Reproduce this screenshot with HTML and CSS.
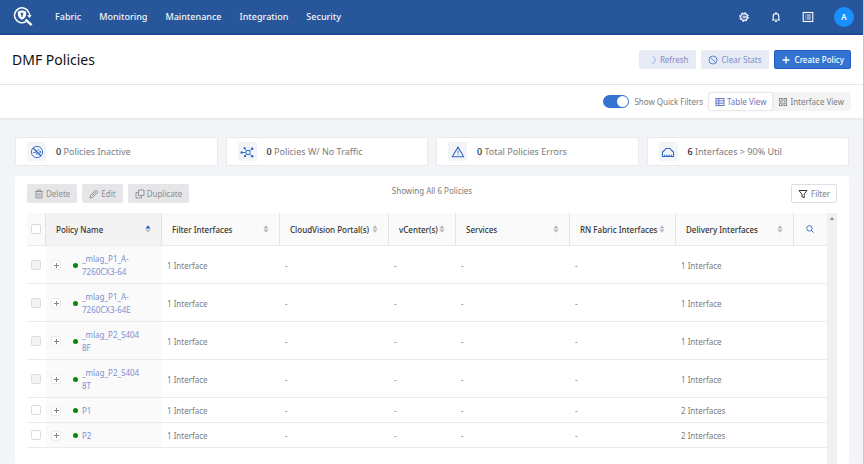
FILE: index.html
```html
<!DOCTYPE html>
<html lang="en">
  <head>
    <meta charset="UTF-8" />
    <meta name="viewport" content="width=device-width, initial-scale=1.0" />
    <title>DMF Policies</title>
    <link rel="stylesheet" href="styles.css">
  </head>
  <body>
    <svg class="defs" aria-hidden="true">
      <symbol id="sort" viewBox="0 0 6 8">
        <path class="up" d="M3 0.3 5.6 3.4H0.4z" />
        <path class="down" d="M3 7.7 5.6 4.6H0.4z" />
      </symbol>
    </svg>

    <header class="navbar">
      <a class="logo" href="#" aria-label="Home">
        <svg viewBox="0 0 20 20" width="20" height="20" fill="none" stroke="#fff">
          <path d="M15.6 5.1A7.4 7.4 0 1 0 12.8 14.6" stroke-width="1.5" />
          <path d="M15.4 4.6C16.4 6 16.8 7.5 16.6 9" stroke-width="1.3" />
          <path d="M14.2 8.2h4.6l-2.5 2.8z" fill="#fff" stroke="none" />
          <path d="M12.6 12.6l6 5.6" stroke-width="2.4" />
          <path d="M9 3.3l4.1 1.3v3c0 2.4-1.6 4.1-4.1 5.2-2.5-1.1-4.1-2.8-4.1-5.2v-3z" fill="#fff" stroke="none" />
          <path d="M9 5.4v4.5M7.7 7h2.6" stroke="#27569b" stroke-width="1.3" />
        </svg>
      </a>
      <nav class="nav-links">
        <a href="#">Fabric</a>
        <a href="#">Monitoring</a>
        <a href="#">Maintenance</a>
        <a href="#">Integration</a>
        <a href="#">Security</a>
      </nav>
      <div class="nav-actions">
        <button class="nav-icon" aria-label="Settings">
          <svg viewBox="0 0 12 12" width="12" height="12" fill="none" stroke="#fff">
            <circle cx="6" cy="6" r="3.4" stroke-width="1.2" />
            <circle cx="6" cy="6" r="4.4" stroke-width="1" stroke-dasharray="1.7 1.756" />
            <circle cx="6" cy="6" r="1.1" stroke-width="0.9" />
            <path d="M7 6h2.5" />
          </svg>
        </button>
        <button class="nav-icon" aria-label="Notifications">
          <svg viewBox="0 0 12 12" width="12" height="12" fill="none" stroke="#fff">
            <path d="M2 9h8M3.2 9V5.4a2.8 2.8 0 0 1 5.6 0V9M6 1v1.6" stroke-width="1.1" />
            <path d="M5 10.5h2" stroke-width="1.2" />
          </svg>
        </button>
        <button class="nav-icon" aria-label="Event list">
          <svg viewBox="0 0 12 12" width="12" height="12" fill="none" stroke="#fff">
            <rect x="1.2" y="1.5" width="9.6" height="9" stroke-width="1.1" />
            <path d="M3.3 4h1M5 4h3.8M3.3 6h1M5 6h3.8M3.3 8h1M5 8h3.8" stroke-width="0.9" />
          </svg>
        </button>
        <button class="avatar">A</button>
      </div>
    </header>

    <div class="title-bar">
      <h1>DMF Policies</h1>
      <div class="title-actions">
        <button class="btn btn-soft">
          <svg viewBox="0 0 10 10" width="10" height="10" fill="none" stroke="#8ea4d6">
            <path d="M6.5 1.2a4 4 0 0 1-.5 7.7" stroke-width="0.8" />
          </svg>
          Refresh
        </button>
        <button class="btn btn-soft">
          <svg viewBox="0 0 10 10" width="10" height="10" fill="none" stroke="#6686cc">
            <circle cx="5" cy="5" r="4" />
            <path d="M2.2 2.2l5.6 5.6" />
          </svg>
          Clear Stats
        </button>
        <button class="btn btn-primary">
          <svg viewBox="0 0 10 10" width="10" height="10" fill="none" stroke="#fff">
            <path d="M5 1.5v7M1.5 5h7" stroke-width="1.3" />
          </svg>
          Create Policy
        </button>
      </div>
    </div>

    <div class="view-bar">
      <label class="quick-filters">
        <input class="switch" type="checkbox" checked />
        Show Quick Filters
      </label>
      <div class="segmented">
        <label class="segment">
          <input type="radio" name="view" checked />
          <svg viewBox="0 0 10 10" width="10" height="10" fill="none" stroke="currentColor">
            <rect x="1" y="1.5" width="8" height="7" />
            <path d="M1 3.8h8M1 6.2h8M3.8 1.5v7" />
          </svg>
          Table View
        </label>
        <label class="segment">
          <input type="radio" name="view" />
          <svg viewBox="0 0 10 10" width="10" height="10" fill="none" stroke="currentColor" stroke-width="0.9">
            <rect x="1.5" y="1.5" width="2.6" height="2.6" />
            <rect x="6" y="1.5" width="2.6" height="2.6" />
            <rect x="1.5" y="6" width="2.6" height="2.6" />
            <rect x="6" y="6" width="2.6" height="2.6" />
          </svg>
          Interface View
        </label>
      </div>
    </div>

    <main class="content">
      <section class="stats">
        <div class="stat">
          <span class="stat-icon">
            <svg viewBox="0 0 14 14" width="14" height="14" fill="none" stroke="#2f66c8">
              <circle cx="7" cy="7" r="5.6" stroke-width="0.9" />
              <path d="M3 3l8 8" stroke-width="1.2" />
              <path d="M3 7.5h2l4-3.5M5.5 7.5l2 2.5M8.5 7h2.500M9.500 5.500L11 7 9.500 8.500" stroke-width="0.8" />
            </svg>
          </span>
          <span><b>0</b> Policies Inactive</span>
        </div>
        <div class="stat">
          <span class="stat-icon">
            <svg viewBox="0 0 14 14" width="14" height="14" fill="none" stroke="#2f66c8">
              <circle cx="8" cy="7.5" r="2.2" />
              <path d="M1.5 7.5h4.3M6.500 5.800L4.800 3.600M9.500 5.800l2.200-1.700M6.500 9.200l-1.300 1.600M9.600 9.200l2.200 1.600" stroke-width="0.9" />
              <g fill="#2f66c8" stroke="none">
                <circle cx="1.7" cy="7.5" r="1.2" />
                <circle cx="4.6" cy="3.2" r="1.1" />
                <circle cx="12.2" cy="3.7" r="1.2" />
                <circle cx="5" cy="11.2" r="1.1" />
                <circle cx="12.2" cy="11.2" r="1.2" />
              </g>
            </svg>
          </span>
          <span><b>0</b> Policies W/ No Traffic</span>
        </div>
        <div class="stat">
          <span class="stat-icon">
            <svg viewBox="0 0 14 14" width="14" height="14" fill="none" stroke="#2f66c8">
              <path d="M7 2l5.700 9.800H1.300z" stroke-width="1.1" stroke-linejoin="round" />
              <path d="M7 5.500v3M7 9.400v1.100" stroke-width="0.9" />
            </svg>
          </span>
          <span><b>0</b> Total Policies Errors</span>
        </div>
        <div class="stat">
          <span class="stat-icon">
            <svg viewBox="0 0 14 14" width="14" height="14" fill="none" stroke="#2f66c8">
              <path d="M1.500 11.500V7l1.500-1.200L5 3.500h4l2 2.300L12.500 7v4.500z" stroke-width="1.1" stroke-linejoin="round" />
              <path d="M3.500 11.500V9.700M5.300 11.500V9.700M7 11.500V9.700M8.700 11.500V9.700M10.500 11.500V9.700" stroke-width="0.9" />
            </svg>
          </span>
          <span><b>6</b> Interfaces &gt; 90% Util</span>
        </div>
      </section>

      <section class="panel">
        <div class="toolbar">
          <div class="toolbar-group">
            <button class="btn btn-muted" disabled>
              <svg viewBox="0 0 10 10" width="10" height="10" fill="none" stroke="currentColor" stroke-width="0.9">
                <path d="M1 2.500h8M3.500 2.500v-1.500h3v1.500M2 2.500v6.500h6V2.500M4 4v3.500M6 4v3.500" />
              </svg>
              Delete
            </button>
            <button class="btn btn-muted" disabled>
              <svg viewBox="0 0 10 10" width="10" height="10" fill="none" stroke="currentColor" stroke-width="0.9">
                <path d="M1 9l.7-2.800L6.800 1.100 8.900 3.200 3.800 8.300zM5.500 2.400l2.100 2.100M3 6.900l3-3" />
              </svg>
              Edit
            </button>
            <button class="btn btn-muted" disabled>
              <svg viewBox="0 0 10 10" width="10" height="10" fill="none" stroke="currentColor" stroke-width="0.9">
                <path d="M3.500 1h5.500v5.500H3.500zM3.500 3.500H1V9h5.500V6.500" />
              </svg>
              Duplicate
            </button>
          </div>
          <p class="summary">Showing All 6 Policies</p>
          <button class="btn btn-outline">
            <svg viewBox="0 0 10 10" width="10" height="10" fill="none" stroke="#333">
              <path d="M1 1.500h8L6.200 5.200v3.600L3.900 7.600V5.200z" />
            </svg>
            Filter
          </button>
        </div>

        <div class="table-wrap">
          <table class="policies">
            <colgroup>
              <col class="col-check" />
              <col class="col-name" />
              <col class="col-filter" />
              <col class="col-portal" />
              <col class="col-vcenter" />
              <col class="col-services" />
              <col class="col-fabric" />
              <col class="col-delivery" />
              <col class="col-search" />
            </colgroup>
            <thead>
              <tr>
                <th class="check"><input type="checkbox" aria-label="Select all" /></th>
                <th class="sorted"><button class="sort">Policy Name <svg class="asc"><use href="#sort" /></svg></button></th>
                <th><button class="sort">Filter Interfaces <svg><use href="#sort" /></svg></button></th>
                <th><button class="sort">CloudVision Portal(s) <svg><use href="#sort" /></svg></button></th>
                <th><button class="sort">vCenter(s) <svg><use href="#sort" /></svg></button></th>
                <th><button class="sort">Services <svg><use href="#sort" /></svg></button></th>
                <th><button class="sort">RN Fabric Interfaces <svg><use href="#sort" /></svg></button></th>
                <th><button class="sort">Delivery Interfaces <svg><use href="#sort" /></svg></button></th>
                <th class="search">
                  <button aria-label="Search">
                    <svg viewBox="0 0 8 8" width="8" height="8" fill="none" stroke="#2f66c8">
                      <circle cx="3.4" cy="3.4" r="2.7" stroke-width="0.9" />
                      <path d="M5.400 5.400l2.200 2.200" />
                    </svg>
                  </button>
                </th>
              </tr>
            </thead>
            <tbody>
              <tr>
                <td class="check"><input type="checkbox" aria-label="Select _mlag_P1_A-7260CX3-64" disabled /></td>
                <td class="name"><div><button class="expand" aria-label="Expand"></button><i class="dot"></i><a href="#">_mlag_P1_A-7260CX3-64</a></div></td>
                <td>1 Interface</td><td>-</td><td>-</td><td>-</td><td>-</td><td>1 Interface</td><td></td>
              </tr>
              <tr>
                <td class="check"><input type="checkbox" aria-label="Select _mlag_P1_A-7260CX3-64E" disabled /></td>
                <td class="name"><div><button class="expand" aria-label="Expand"></button><i class="dot"></i><a href="#">_mlag_P1_A-7260CX3-64E</a></div></td>
                <td>1 Interface</td><td>-</td><td>-</td><td>-</td><td>-</td><td>1 Interface</td><td></td>
              </tr>
              <tr>
                <td class="check"><input type="checkbox" aria-label="Select _mlag_P2_S4048F" disabled /></td>
                <td class="name"><div><button class="expand" aria-label="Expand"></button><i class="dot"></i><a href="#">_mlag_P2_S404<wbr>8F</a></div></td>
                <td>1 Interface</td><td>-</td><td>-</td><td>-</td><td>-</td><td>1 Interface</td><td></td>
              </tr>
              <tr>
                <td class="check"><input type="checkbox" aria-label="Select _mlag_P2_S4048T" disabled /></td>
                <td class="name"><div><button class="expand" aria-label="Expand"></button><i class="dot"></i><a href="#">_mlag_P2_S404<wbr>8T</a></div></td>
                <td>1 Interface</td><td>-</td><td>-</td><td>-</td><td>-</td><td>1 Interface</td><td></td>
              </tr>
              <tr>
                <td class="check"><input type="checkbox" aria-label="Select P1" /></td>
                <td class="name"><div><button class="expand" aria-label="Expand"></button><i class="dot"></i><a href="#">P1</a></div></td>
                <td>1 Interface</td><td>-</td><td>-</td><td>-</td><td>-</td><td>2 Interfaces</td><td></td>
              </tr>
              <tr>
                <td class="check"><input type="checkbox" aria-label="Select P2" /></td>
                <td class="name"><div><button class="expand" aria-label="Expand"></button><i class="dot"></i><a href="#">P2</a></div></td>
                <td>1 Interface</td><td>-</td><td>-</td><td>-</td><td>-</td><td>2 Interfaces</td><td></td>
              </tr>
            </tbody>
          </table>
          <div class="scrollbar"></div>
        </div>
      </section>
    </main>
  </body>
</html>
```

FILE: styles.css
```css
* {
  box-sizing: border-box;
}
body {
  margin: 0;
  min-height: 100vh;
  display: flex;
  flex-direction: column;
  font-family: "Noto Sans", "Open Sans", sans-serif;
  font-size: 8px;
  line-height: 13px;
  color: #7c7c7c;
  background-color: #f3f4f7;
  border-right: 1px solid #c4c8d0;
}
a {
  color: #7d8fd0;
  text-decoration: none;
}
button {
  font: inherit;
  color: inherit;
  padding: 0;
  border: none;
  background: none;
}
svg {
  display: block;
  flex-shrink: 0;
}
.defs {
  position: absolute;
  width: 0;
  height: 0;
}

/* top navigation */
.navbar {
  display: flex;
  align-items: center;
  height: 35px;
  padding: 0 9px 0 13px;
  background-color: #27569b;
  border-bottom: 2px solid #1d4a92;
}
.nav-links {
  display: flex;
  gap: 18px;
  margin-left: 22px;
  font-size: 9px;
  font-weight: 500;
}
.nav-links a {
  color: #f2f5fa;
}
.nav-actions {
  display: flex;
  align-items: center;
  gap: 20px;
  margin-left: auto;
}
.avatar {
  width: 20px;
  height: 20px;
  border-radius: 50%;
  background-color: #1890ff;
  color: white;
  font-weight: 600;
}

/* page title and view options */
.title-bar {
  display: flex;
  align-items: center;
  justify-content: space-between;
  height: 50px;
  padding: 0 12px;
  background-color: white;
  border-bottom: 1px solid #e6e6e8;
}
h1 {
  margin: 0;
  font-size: 14px;
  line-height: 20px;
  font-weight: 400;
  color: #111;
}
.title-actions,
.toolbar-group {
  display: flex;
  gap: 5px;
}
.btn {
  display: flex;
  align-items: center;
  gap: 4px;
  height: 19px;
  padding: 0 7px;
  border-radius: 2px;
  white-space: nowrap;
}
.btn-soft {
  color: #8090c4;
  background-color: #e6ebf6;
}
.btn-primary {
  padding: 0 6px;
  color: white;
  font-weight: 500;
  background-color: #3473d0;
  border: 1px solid #1b5fc6;
}
.btn-muted {
  gap: 2px;
  color: #8c8c90;
  background-color: #e6e6e9;
}
.btn-outline {
  gap: 3px;
  padding: 0 6px;
  background-color: white;
  border: 1px solid #dedee2;
}
.view-bar {
  display: flex;
  align-items: center;
  justify-content: flex-end;
  gap: 5px;
  height: 35px;
  padding: 0 12px;
  background-color: white;
  border-bottom: 2px solid #ebebed;
}
.quick-filters {
  display: flex;
  align-items: center;
  gap: 5px;
}
.switch {
  appearance: none;
  margin: 0;
  width: 26px;
  height: 13px;
  padding: 1px;
  border-radius: 7px;
  background-color: #3473d0;
}
.switch::before {
  content: "";
  display: block;
  width: 11px;
  height: 11px;
  margin-left: auto;
  border-radius: 50%;
  background-color: white;
}
.segmented {
  display: flex;
  padding: 1px;
  border-radius: 2px;
  background-color: #f4f4f5;
}
.segment {
  display: flex;
  align-items: center;
  gap: 2px;
  height: 17px;
  padding: 0 6px;
  border-radius: 2px;
}
.segment input {
  appearance: none;
  position: absolute;
  margin: 0;
}
.segment:has(input:checked) {
  color: #667bc4;
  background-color: white;
  box-shadow: 0 0 3px rgba(0, 0, 0, 0.15);
}

/* quick filter cards */
.content {
  flex: 1;
  display: flex;
  flex-direction: column;
  gap: 10px;
  padding: 17px 14px 0 15px;
}
.stats {
  display: grid;
  grid-template-columns: repeat(4, 1fr);
  gap: 8px;
}
.stat {
  display: flex;
  align-items: center;
  gap: 10px;
  height: 29px;
  padding: 0 11px;
  font-size: 9px;
  background-color: white;
  border: 1px solid #eaeaed;
  border-radius: 2px;
}
.stat b {
  font-weight: 500;
  color: #222;
}
.stat-icon {
  display: grid;
  place-items: center;
  width: 19px;
  height: 19px;
  border-radius: 2px;
  background-color: #f3f4f7;
}

/* policies table */
.panel {
  flex: 1;
  display: flex;
  flex-direction: column;
  padding: 8px 12px 0;
  background-color: white;
  border-radius: 2px;
}
.toolbar {
  display: grid;
  grid-template-columns: 1fr auto 1fr;
  align-items: start;
  margin-bottom: 10px;
}
.toolbar .btn-outline {
  justify-self: end;
}
.summary {
  margin: 0;
}
.table-wrap {
  flex: 1;
  display: flex;
  align-items: flex-start;
}
.policies {
  flex: 1;
  table-layout: fixed;
  width: 100%;
  border-collapse: separate;
  border-spacing: 0;
}
.col-check { width: 19px; }
.col-name { width: 116px; }
.col-filter { width: 118px; }
.col-portal { width: 109px; }
.col-vcenter { width: 67px; }
.col-services { width: 114px; }
.col-fabric { width: 106px; }
.col-delivery { width: 118px; }
.policies th {
  height: 33px;
  padding: 0 10px;
  font-weight: 500;
  color: #333;
  text-align: left;
  white-space: nowrap;
  background-color: #fafafa;
  border-right: 1px solid #e4e4e6;
  border-bottom: 1px solid #ebebed;
}
.policies th.sorted {
  background-color: #f3f3f4;
}
.policies .search {
  padding: 0 12px;
  border-right: none;
}
.policies td {
  height: 25px;
  padding: 6px 5px 5px;
  border-bottom: 1px solid #ebebed;
}
.policies .check {
  padding: 0 4px;
}
.check input {
  appearance: none;
  display: block;
  width: 10px;
  height: 10px;
  margin: 0;
  background-color: white;
  border: 1px solid #dcdcdf;
  border-radius: 2px;
}
.check input:disabled {
  background-color: #f3f3f4;
}
.sort {
  display: flex;
  align-items: center;
  justify-content: space-between;
  width: 100%;
}
.sort svg {
  width: 6px;
  height: 8px;
  fill: #b9b9bd;
}
.up {
  fill: var(--up, #b9b9bd);
}
.sort .asc {
  --up: #1f66cc;
}
.policies .name {
  background-color: #fafafa;
}
.name div {
  display: flex;
  align-items: center;
}
.name a {
  width: 60px;
}
.expand {
  flex-shrink: 0;
  width: 10px;
  height: 10px;
  border: 1px solid #ececef;
  border-radius: 2px;
  background: linear-gradient(#888, #888) center / 5px 1px no-repeat,
    linear-gradient(#888, #888) center / 1px 5px no-repeat white;
}
.dot {
  flex-shrink: 0;
  width: 5px;
  height: 5px;
  margin: 0 4px 0 12px;
  border-radius: 50%;
  background-color: #0b840b;
}
.scrollbar {
  align-self: stretch;
  width: 10px;
  padding-top: 4px;
  background-color: #f0f0f1;
}
.scrollbar::before {
  content: "";
  display: block;
  width: 4px;
  height: 3px;
  margin: 0 auto;
  background-color: #888;
  clip-path: polygon(50% 0, 100% 100%, 0 100%);
}
```
